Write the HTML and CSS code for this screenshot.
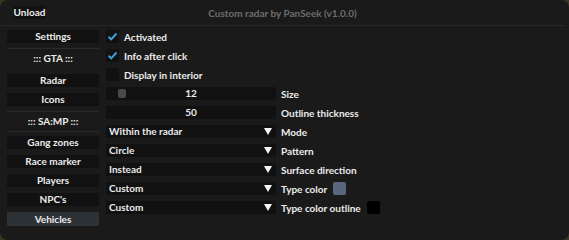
FILE: index.html
```html
<!DOCTYPE html>
<html lang="en">
<head>
  <meta charset="UTF-8" />
  <title>Custom radar</title>
  <link rel="stylesheet" href="styles.css">
</head>
<body>

  <div class="window">
    <!-- Title bar -->
    <div class="titlebar">
      <button class="unload">Unload</button>
      <div class="title">Custom radar by PanSeek (v1.0.0)</div>
    </div>

    <div class="content">
      <!-- Sidebar -->
      <div class="sidebar">
        <button class="side-btn">Settings</button>
        <div class="sep"></div>
        <div class="group">::: GTA :::</div>
        <button class="side-btn">Radar</button>
        <button class="side-btn">Icons</button>
        <div class="sep"></div>
        <div class="group tight">::: SA:MP :::</div>
        <div class="sep last"></div>
        <button class="side-btn">Gang zones</button>
        <button class="side-btn">Race marker</button>
        <button class="side-btn">Players</button>
        <button class="side-btn">NPC's</button>
        <button class="side-btn active">Vehicles</button>
      </div>

      <!-- Settings panel -->
      <div class="panel">
        <div class="row">
          <span class="check"><svg viewBox="0 0 13 13"><path d="M2.5 6.8 L5.2 9.3 L10.5 3.5" /></svg></span>
          <span class="label">Activated</span>
        </div>
        <div class="row">
          <span class="check"><svg viewBox="0 0 13 13"><path d="M2.5 6.8 L5.2 9.3 L10.5 3.5" /></svg></span>
          <span class="label">Info after click</span>
        </div>
        <div class="row">
          <span class="check"></span>
          <span class="label">Display in interior</span>
        </div>
        <div class="row">
          <div class="field slider"><span class="grab"></span>12</div>
          <span class="label">Size</span>
        </div>
        <div class="row">
          <div class="field">50</div>
          <span class="label">Outline thickness</span>
        </div>
        <div class="row">
          <div class="field combo">Within the radar<span class="arrow"></span></div>
          <span class="label">Mode</span>
        </div>
        <div class="row">
          <div class="field combo">Circle<span class="arrow"></span></div>
          <span class="label">Pattern</span>
        </div>
        <div class="row">
          <div class="field combo">Instead<span class="arrow"></span></div>
          <span class="label">Surface direction</span>
        </div>
        <div class="row">
          <div class="field combo">Custom<span class="arrow"></span></div>
          <span class="label">Type color</span>
          <span class="swatch blue"></span>
        </div>
        <div class="row">
          <div class="field combo">Custom<span class="arrow"></span></div>
          <span class="label">Type color outline</span>
          <span class="swatch black"></span>
        </div>
      </div>
    </div>
  </div>

</body>
</html>
```

FILE: styles.css
```css
* {
  box-sizing: border-box;
}

body {
  margin: 0;
  background: #3a3522;
  font-family: 'Lato', 'Liberation Sans', sans-serif;
  font-size: 10px;
  font-weight: 700;
  color: #ececec;
}

.window {
  width: 569px;
  height: 240px;
  background: #1a1a1a;
  border-radius: 8px;
  overflow: hidden;
}

/* Title bar */
.titlebar {
  position: relative;
  height: 26px;
  border-bottom: 1px solid #272727;
  display: flex;
  align-items: center;
  margin-right: 4px;
}

.unload {
  margin-left: 13px;
  height: 13px;
  width: 33px;
  padding: 0;
  border: none;
  background: #121212;
  color: #ececec;
  font: inherit;
  line-height: 13px;
}

.title {
  position: absolute;
  left: 0;
  right: 0;
  text-align: center;
  color: #6d6d6d;
  pointer-events: none;
}

/* Body */
.content {
  display: flex;
  gap: 7px;
  padding: 4px 0 0 7px;
}

.sidebar {
  width: 92px;
  display: flex;
  flex-direction: column;
}

.side-btn {
  height: 13px;
  margin-bottom: 6px;
  padding: 0;
  border: none;
  border-radius: 1px;
  background: #111111;
  color: #ececec;
  font: inherit;
  line-height: 13px;
}

.side-btn.active {
  background: #2c3235;
  height: 14px;
}

.sep {
  height: 1px;
  background: #2a2a2a;
  margin-top: -1px;
}

.sep.last {
  margin-top: 0;
  margin-bottom: 4px;
}

.group {
  height: 19px;
  line-height: 19px;
  text-align: center;
  margin-bottom: 6px;
}

.group.tight {
  margin-bottom: 0;
}

/* Panel */
.panel {
  display: flex;
  flex-direction: column;
  gap: 6px;
}

.row {
  height: 13px;
  display: flex;
  align-items: center;
}

.check {
  width: 13px;
  height: 13px;
  background: #111111;
  margin-right: 5px;
  display: flex;
}

.check svg {
  width: 13px;
  height: 13px;
  fill: none;
  stroke: #3c9fdc;
  stroke-width: 2;
}

.field {
  position: relative;
  width: 170px;
  height: 13px;
  background: #111111;
  text-align: center;
  line-height: 13px;
  margin-right: 5px;
}

.grab {
  position: absolute;
  left: 12px;
  top: 2px;
  width: 8px;
  height: 9px;
  border-radius: 2px;
  background: #494949;
}

.combo {
  text-align: left;
  padding-left: 3px;
}

.arrow {
  position: absolute;
  right: 4px;
  top: 3px;
  width: 0;
  height: 0;
  border-left: 4px solid transparent;
  border-right: 4px solid transparent;
  border-top: 7px solid #f4f4f4;
}

.swatch {
  width: 13px;
  height: 13px;
  margin-left: 6px;
  border-radius: 2px;
}

.swatch.blue {
  background: #5a6680;
}

.swatch.black {
  background: #000000;
}
```
